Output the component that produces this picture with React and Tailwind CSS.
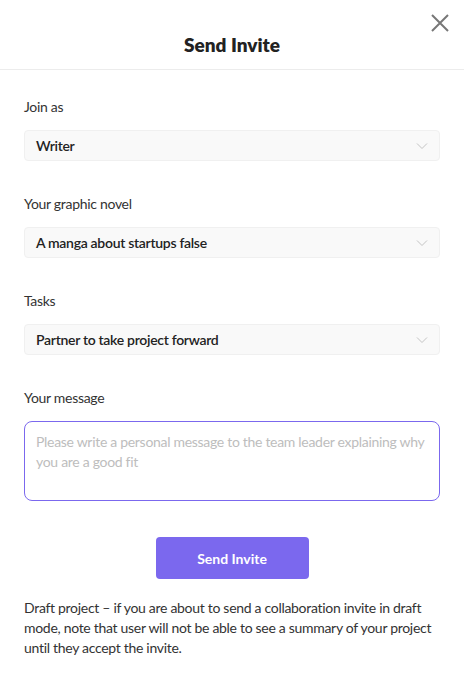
import React, { useState } from 'react';

const Chevron = () => (
  <svg width="12" height="8" viewBox="0 0 12 8" fill="none" className="shrink-0">
    <path d="M1 1.5L6 6.5L11 1.5" stroke="#c4c4c4" strokeWidth="1" />
  </svg>
);

const SelectField = ({ label, value }) => (
  <div className="flex flex-col">
    <label className="text-[14px] leading-5 text-[#333]">{label}</label>
    <div className="mt-[13px] flex h-[31px] items-center justify-between rounded-[4px] border border-[#f0f0f0] bg-[#f9f9f9] pl-[11px] pr-[11px]">
      <span className="text-[14px] font-semibold text-[#222]">{value}</span>
      <Chevron />
    </div>
  </div>
);

export default function App() {
  const [message, setMessage] = useState('');

  return (
    <div className="min-h-screen bg-white font-['Lato','Noto_Sans',sans-serif] tracking-[-0.3px]">
      <div className="relative mr-[2px] flex h-[70px] items-center justify-center border-b border-[#ececec] pt-[21px]">
        <h1 className="text-[19px] font-extrabold tracking-normal text-[#222]">Send Invite</h1>
        <button className="absolute right-[13px] top-[12px] p-[1px]" aria-label="Close">
          <svg width="20" height="20" viewBox="0 0 20 20">
            <path d="M2 2L18 18M18 2L2 18" stroke="#777" strokeWidth="2" />
          </svg>
        </button>
      </div>

      <div className="flex flex-col pl-[24px] pr-[26px] pt-[27px]">
        <div className="flex flex-col gap-[33px]">
          <SelectField label="Join as" value="Writer" />
          <SelectField label="Your graphic novel" value="A manga about startups false" />
          <SelectField label="Tasks" value="Partner to take project forward" />
          <div className="flex flex-col">
            <label className="text-[14px] leading-5 text-[#333]">Your message</label>
            <textarea
              value={message}
              onChange={(e) => setMessage(e.target.value)}
              placeholder="Please write a personal message to the team leader explaining why you are a good fit"
              className="mt-[13px] h-[80px] resize-none rounded-[8px] border border-[#7b68ee] px-[11px] pt-[10px] text-[14px] leading-5 text-[#333] placeholder-[#bdbdbd] outline-none"
            />
          </div>
        </div>

        <div className="mt-[36px] flex justify-center">
          <button className="h-[42px] w-[153px] rounded-[4px] bg-[#7b68ee] text-[14px] font-bold tracking-normal text-white">
            Send Invite
          </button>
        </div>

        <p className="mt-[19px] text-[14px] leading-5 text-[#333]">
          Draft project – if you are about to send a collaboration invite in draft mode, note that user will not be able to see a summary of your project until they accept the invite.
        </p>
      </div>
    </div>
  );
}
